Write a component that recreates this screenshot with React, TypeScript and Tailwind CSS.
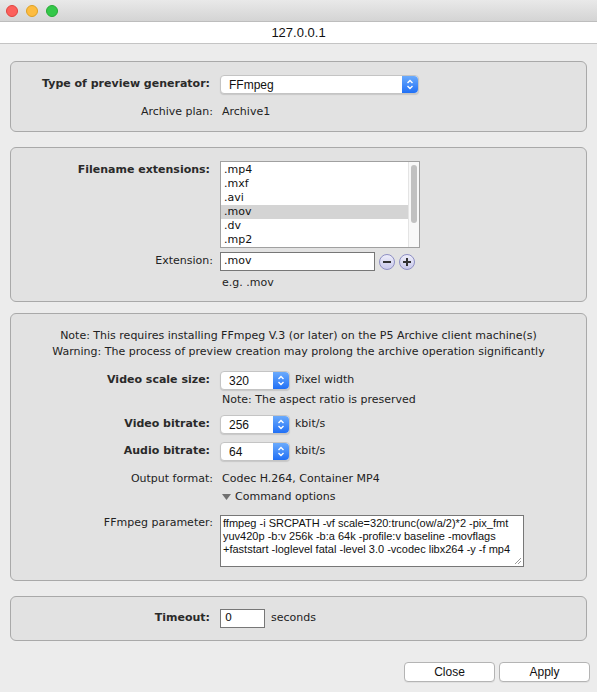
import React from "react";

const ui = { fontFamily: '"DejaVu Sans", "Noto Sans", sans-serif' };
const helv = { fontFamily: '"Liberation Sans", Arial, sans-serif' };

function Stepper() {
  return (
    <div className="w-[16px] h-full rounded-r-[4px] bg-gradient-to-b from-[#6aaafc] to-[#1f6ff5] flex items-center justify-center">
      <svg width="8" height="11" viewBox="0 0 8 11" fill="none" stroke="white" strokeWidth="1.4">
        <path d="M1.5 4 L4 1.5 L6.5 4" />
        <path d="M1.5 7 L4 9.5 L6.5 7" />
      </svg>
    </div>
  );
}

function Select({ value, width }: { value: string; width: string }) {
  return (
    <div className={`${width} h-[19px] flex bg-white rounded-[4px] border border-[#c4c4c4] shadow-[0_1px_1px_rgba(0,0,0,0.12)]`}>
      <div className="flex-1 pl-[8px] flex items-center text-[12px] text-[#111]" style={helv}>
        {value}
      </div>
      <Stepper />
    </div>
  );
}

function Label({ children, bold }: { children: React.ReactNode; bold?: boolean }) {
  return (
    <div
      className={`w-[202px] shrink-0 text-right text-[11px] ${bold ? "font-bold pr-[3px] text-[#2a2a2a]" : "text-[#222]"}`}
    >
      {children}
    </div>
  );
}

function RoundBtn({ plus }: { plus?: boolean }) {
  return (
    <div className="w-[16px] h-[16px] rounded-full border border-[#8e8fc4] bg-gradient-to-b from-[#eeeefa] to-[#c9c9ea] flex items-center justify-center">
      <svg width="10" height="10" viewBox="0 0 10 10">
        <rect x="1" y="4" width="8" height="2" fill="#333" />
        {plus && <rect x="4" y="1" width="2" height="8" fill="#333" />}
      </svg>
    </div>
  );
}

export default function App() {
  const exts = [".mp4", ".mxf", ".avi", ".mov", ".dv", ".mp2"];
  return (
    <div className="w-[597px] h-[692px] bg-[#ececec] flex flex-col text-[#222]" style={ui}>
      {/* title bar */}
      <div className="h-[22px] shrink-0 bg-gradient-to-b from-[#e9e9e9] to-[#d4d4d4] border-b border-[#bdbdbd] flex items-center pl-[6px] gap-[8px]">
        <div className="w-[12px] h-[12px] rounded-full bg-[#fc605c] border border-[#e0443e]" />
        <div className="w-[12px] h-[12px] rounded-full bg-[#fdbc40] border border-[#dea123]" />
        <div className="w-[12px] h-[12px] rounded-full bg-[#34c84a] border border-[#27aa35]" />
      </div>
      <div className="h-[22px] shrink-0 bg-white border-b border-[#c4c4c4] flex items-center justify-center text-[13px] text-[#111]" style={helv}>
        127.0.0.1
      </div>

      <div className="px-[10px] flex flex-col">
        {/* panel 1 */}
        <div className="mt-[17px] h-[71px] rounded-[6px] border border-[#a9a9a9] bg-[#e2e2e2] flex flex-col pt-[13px]">
          <div className="flex items-center h-[19px]">
            <Label bold>Type of preview generator:</Label>
            <div className="ml-[7px]">
              <Select value="FFmpeg" width="w-[199px]" />
            </div>
          </div>
          <div className="flex items-center h-[16px] mt-[10px]">
            <Label>Archive plan:</Label>
            <div className="ml-[9px] text-[11px]">Archive1</div>
          </div>
        </div>

        {/* panel 2 */}
        <div className="mt-[15px] h-[155px] rounded-[6px] border border-[#a9a9a9] bg-[#e2e2e2] flex flex-col pt-[13px]">
          <div className="flex items-start">
            <div className="pt-[2px] h-[16px] flex items-center">
              <Label bold>Filename extensions:</Label>
            </div>
            <div className="ml-[7px] w-[200px] h-[87px] bg-white border border-[#a0a0a0] flex">
              <div className="flex-1 pt-[1px] flex flex-col">
                {exts.map((e) => (
                  <div
                    key={e}
                    className={`h-[14px] pl-[3px] flex items-center text-[11px] text-[#111] ${e === ".mov" ? "bg-[#d4d4d4]" : ""}`}
                  >
                    {e}
                  </div>
                ))}
              </div>
              <div className="w-[11px] bg-[#f8f8f8] border-l border-[#e4e4e4] pt-[3px] flex justify-center">
                <div className="w-[6px] h-[58px] rounded-full bg-[#c1c1c1]" />
              </div>
            </div>
          </div>
          <div className="flex items-center mt-[4px] h-[19px]">
            <Label>Extension:</Label>
            <div className="ml-[7px] w-[155px] h-[19px] bg-white border border-[#777] flex items-center pl-[3px] text-[11px] text-[#111]">
              .mov
            </div>
            <div className="ml-[4px] flex gap-[4px]">
              <RoundBtn />
              <RoundBtn plus />
            </div>
          </div>
          <div className="flex items-center mt-[4px] h-[16px]">
            <div className="w-[202px]" />
            <div className="ml-[9px] text-[11px]">e.g. .mov</div>
          </div>
        </div>

        {/* panel 3 */}
        <div className="mt-[11px] h-[268px] rounded-[6px] border border-[#a9a9a9] bg-[#e2e2e2] flex flex-col pt-[14px]">
          <div className="text-center text-[11px] leading-[16px]">
            Note: This requires installing FFmpeg V.3 (or later) on the P5 Archive client machine(s)
          </div>
          <div className="text-center text-[11px] leading-[16px]">
            Warning: The process of preview creation may prolong the archive operation significantly
          </div>

          <div className="flex items-center h-[19px] mt-[11px]">
            <Label bold>Video scale size:</Label>
            <div className="ml-[7px]">
              <Select value="320" width="w-[70px]" />
            </div>
            <div className="ml-[5px] text-[11px]">Pixel width</div>
          </div>
          <div className="flex items-center h-[16px] mt-[2px]">
            <div className="w-[202px]" />
            <div className="ml-[9px] text-[11px]">Note: The aspect ratio is preserved</div>
          </div>

          <div className="flex items-center h-[19px] mt-[7px]">
            <Label bold>Video bitrate:</Label>
            <div className="ml-[7px]">
              <Select value="256" width="w-[70px]" />
            </div>
            <div className="ml-[5px] text-[11px]">kbit/s</div>
          </div>
          <div className="flex items-center h-[19px] mt-[8px]">
            <Label bold>Audio bitrate:</Label>
            <div className="ml-[7px]">
              <Select value="64" width="w-[70px]" />
            </div>
            <div className="ml-[5px] text-[11px]">kbit/s</div>
          </div>

          <div className="flex items-center h-[16px] mt-[10px]">
            <Label>Output format:</Label>
            <div className="ml-[9px] text-[11px]">Codec H.264, Container MP4</div>
          </div>
          <div className="flex items-center h-[16px] mt-[2px]">
            <div className="w-[202px]" />
            <div className="ml-[9px] flex items-center gap-[4px] text-[11px]">
              <svg width="9" height="6" viewBox="0 0 9 6">
                <path d="M0 0 H9 L4.5 6 Z" fill="#707070" />
              </svg>
              Command options
            </div>
          </div>

          <div className="flex items-start mt-[10px]">
            <div className="h-[16px] pt-[1px] flex items-center">
              <Label>FFmpeg parameter:</Label>
            </div>
            <div
              className="relative ml-[7px] w-[304px] h-[52px] bg-white border border-[#777] px-[2px] pt-[1px] text-[11px] leading-[13px] text-[#111]"
              style={helv}
            >
              ffmpeg -i SRCPATH -vf scale=320:trunc(ow/a/2)*2 -pix_fmt yuv420p -b:v 256k -b:a 64k -profile:v baseline -movflags +faststart -loglevel fatal -level 3.0 -vcodec libx264 -y -f mp4
              <svg className="absolute right-[1px] bottom-[1px]" width="8" height="8" viewBox="0 0 8 8" stroke="#999" strokeWidth="1">
                <path d="M7 1 L1 7 M7 4 L4 7" />
              </svg>
            </div>
          </div>
        </div>

        {/* panel 4 */}
        <div className="mt-[15px] h-[45px] rounded-[6px] border border-[#a9a9a9] bg-[#e2e2e2] flex items-center">
          <Label bold>Timeout:</Label>
          <div className="ml-[7px] w-[45px] h-[19px] bg-white border border-[#777] flex items-center pl-[4px] text-[11px] text-[#111]">
            0
          </div>
          <div className="ml-[6px] text-[11px]">seconds</div>
        </div>

        {/* buttons */}
        <div className="flex justify-end gap-[4px] mt-[21px]">
          <div className="w-[91px] h-[20px] bg-white border border-[#b4b4b4] rounded-[4px] shadow-[0_1px_0_rgba(0,0,0,0.05)] flex items-center justify-center text-[12px] text-[#111]" style={helv}>
            Close
          </div>
          <div className="w-[91px] h-[20px] mr-[-3px] bg-white border border-[#b4b4b4] rounded-[4px] shadow-[0_1px_0_rgba(0,0,0,0.05)] flex items-center justify-center text-[12px] text-[#111]" style={helv}>
            Apply
          </div>
        </div>
      </div>
    </div>
  );
}
